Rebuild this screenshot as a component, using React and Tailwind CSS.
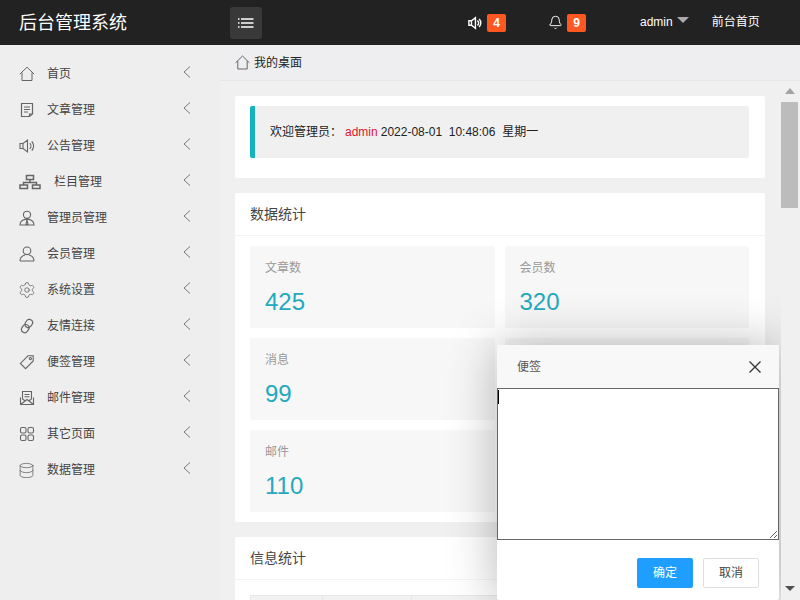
import React from 'react';
import { Settings, Database, Bell } from 'lucide-react';

const Svg = ({ size = 16, w, stroke = 1, children, className = '' }) => (
  <svg
    width={w || size}
    height={size}
    viewBox={`0 0 ${w || size} ${size}`}
    fill="none"
    stroke="currentColor"
    strokeWidth={stroke}
    className={className}
  >
    {children}
  </svg>
);

const HomeIcon = () => (
  <Svg>
    <path d="M0.8 8.2 8 1.2l7.2 7M3 6.5v8h10v-8" />
  </Svg>
);
const DocIcon = () => (
  <Svg stroke={1.2}>
    <path d="M2.5 1.5h11v10.5l-3 2.5h-8zM5 5h6M5 7.5h6M5 10h4M10.5 14.5v-2.5h3" />
  </Svg>
);
const SpeakerIcon = ({ className, stroke = 1.1 }) => (
  <Svg className={className} stroke={stroke}>
    <path d="M1 5.5h3l4.5-3.5v12L4 10.5H1zM4 5.5v5M10.8 5.2a4 4 0 0 1 0 5.6M12.8 3.5a6.5 6.5 0 0 1 0 9" />
  </Svg>
);
const NetworkIcon = () => (
  <Svg w={22} stroke={1.5}>
    <path d="M7.5 1.5h7v4h-7zM1 11h7.5v3.5H1zM13.5 11H21v3.5h-7.5zM11 5.5v3M4.5 11V8.5h13V11" />
  </Svg>
);
const ManagerIcon = () => (
  <Svg stroke={1.1}>
    <circle cx="8" cy="4.8" r="3.6" />
    <path d="M1 15c0-3.4 2.6-5 5-5.6h4c2.4.6 5 2.2 5 5.6zM8 10l-1 4 1 1 1-1z" />
  </Svg>
);
const UserIcon = () => (
  <Svg stroke={1.1}>
    <circle cx="8" cy="4.8" r="3.8" />
    <path d="M1 15c0-3.4 2.6-5.4 5-6M15 15c0-3.4-2.6-5.4-5-6M1 15h14" />
  </Svg>
);
const ChainIcon = () => (
  <Svg stroke={1.2}>
    <rect x="6.5" y="1.2" width="6.5" height="8.5" rx="3.2" transform="rotate(35 9.7 5.5)" />
    <rect x="3" y="6.3" width="6.5" height="8.5" rx="3.2" transform="rotate(35 6.2 10.5)" />
  </Svg>
);
const TagIcon = () => (
  <Svg stroke={1.1}>
    <path d="M9 1.8h5.2V7l-7.6 7.6-5.2-5.2z" />
    <circle cx="11.4" cy="4.6" r="1.1" />
  </Svg>
);
const MailIcon = () => (
  <Svg stroke={1.1}>
    <path d="M1.5 7.5v7h13v-7M3.5 9V1.5h9V9M1.5 14.5 8 9.5l6.5 5M3.5 9 6 10.8M12.5 9 10 10.8M5.5 4.5h5M5.5 6.8h5" />
  </Svg>
);
const GridIcon = () => (
  <Svg stroke={1.1}>
    <rect x="1.5" y="1.5" width="5.5" height="5.5" rx="1.5" />
    <rect x="9" y="1.5" width="5.5" height="5.5" rx="1.5" />
    <rect x="1.5" y="9" width="5.5" height="5.5" rx="1.5" />
    <rect x="9" y="9" width="5.5" height="5.5" rx="1.5" />
  </Svg>
);

const menu = [
  { label: '首页', icon: <HomeIcon /> },
  { label: '文章管理', icon: <DocIcon /> },
  { label: '公告管理', icon: <SpeakerIcon /> },
  { label: '栏目管理', icon: <NetworkIcon />, wide: true },
  { label: '管理员管理', icon: <ManagerIcon /> },
  { label: '会员管理', icon: <UserIcon /> },
  { label: '系统设置', icon: <Settings size={18} strokeWidth={1.1} className="-ml-px" /> },
  { label: '友情连接', icon: <ChainIcon /> },
  { label: '便签管理', icon: <TagIcon /> },
  { label: '邮件管理', icon: <MailIcon /> },
  { label: '其它页面', icon: <GridIcon /> },
  { label: '数据管理', icon: <Database size={17} strokeWidth={1.1} className="-ml-px" /> },
];

// 右列被弹窗挡住的格子不写内容
const stats = [
  { label: '文章数', value: 425 },
  { label: '会员数', value: 320 },
  { label: '消息', value: 99 },
  {},
  { label: '邮件', value: 110 },
  {},
];

const Badge = ({ children }) => (
  <span className="ml-[5px] flex h-[18px] w-[19px] items-center justify-center rounded-[2px] bg-[#ff5722] text-xs font-bold text-white">
    {children}
  </span>
);

export default function App() {
  return (
    <div className="flex h-[600px] w-[800px] flex-col overflow-hidden bg-[#f0f0f0] font-['Liberation_Sans','Noto_Sans_CJK_SC',sans-serif] text-xs text-[#333]">
      <header className="flex h-[45px] shrink-0 items-center bg-[#222] text-white">
        <div className="w-[230px] pl-[19px] text-lg">后台管理系统</div>
        <button className="flex h-8 w-8 items-center justify-center rounded-[3px] bg-[#393939]">
          <svg width="16" height="10" viewBox="0 0 16 10" fill="none" stroke="white" strokeWidth="1.3">
            <path d="M0 1h1.5M3 1h12.5M0 5h1.5M3 5h12.5M0 9h1.5M3 9h12.5" />
          </svg>
        </button>
        <div className="ml-[206px] flex items-center">
          <SpeakerIcon className="w-[14px]" stroke={1.6} />
          <Badge>4</Badge>
        </div>
        <div className="ml-[42px] flex items-center">
          <Bell size={15} strokeWidth={1.5} className="-mr-px" />
          <Badge>9</Badge>
        </div>
        <div className="ml-[54px] flex items-center pb-[2px]">
          admin
          <span className="mb-[3px] ml-[4px] h-0 w-0 border-x-[6px] border-t-[6px] border-x-transparent border-t-[#aaa]"></span>
        </div>
        <div className="ml-[23px] pb-[2px]">前台首页</div>
      </header>

      <div className="flex min-h-0 flex-1">
        <aside className="w-[220px] shrink-0 bg-[#eee] pt-[11px]">
          {menu.map((item) => (
            <div key={item.label} className="flex h-9 items-center pl-[19px] text-[#444]">
              <span className={`flex shrink-0 text-[#666] ${item.wide ? 'w-[35px]' : 'w-7'}`}>{item.icon}</span>
              <span className="flex-1">{item.label}</span>
              <svg width="8" height="12" viewBox="0 0 8 12" fill="none" stroke="#777" strokeWidth="1" className="mr-[29px] mb-[4px]">
                <path d="M7 0.5 1 6l6 5.5" />
              </svg>
            </div>
          ))}
        </aside>

        <main className="flex min-w-0 flex-1 flex-col">
          <div className="flex h-[36px] shrink-0 items-center border-b border-[#e6e6e6] bg-[#eeeef0] pl-[15px] text-[#222]">
            <span className="mr-[4px] text-[#666]">
              <Svg size={15}>
                <path d="M0.6 7.8 7.5 1l6.9 6.8M2.8 6v8h9.4V6" />
              </Svg>
            </span>
            我的桌面
          </div>

          <div className="flex min-h-0 flex-1">
            <div className="relative min-w-0 flex-1 overflow-hidden pt-[15px] pr-4 pl-[15px]">
              <section className="rounded-[2px] bg-white pt-[10px] pr-4 pb-[20px] pl-[15px]">
                <div className="flex h-[52px] items-center rounded-[2px] border-l-[5px] border-[#14b1bf] bg-[#f0f0f0] pl-[15px] text-[#222]">
                  欢迎管理员：
                  <span className="ml-[3px] text-[#e3132f]">admin</span>
                  <span className="ml-[3px] whitespace-pre">2022-08-01  10:48:06  星期一</span>
                </div>
              </section>

              <section className="mt-[15px] rounded-[2px] bg-white">
                <div className="flex h-[43px] items-center border-b border-[#f4f4f4] pl-[15px] text-sm text-[#444]">数据统计</div>
                <div className="grid grid-cols-2 gap-[10px] py-[10px] pr-4 pl-[15px]">
                  {stats.map((s, i) => (
                    <div key={i} className="h-[82px] rounded-[2px] bg-[#f7f7f8] pt-[14px] pl-[15px]">
                      {s.label && <div className="leading-[16px] text-[#999]">{s.label}</div>}
                      {s.label && <div className="mt-[8px] text-2xl leading-[36px] text-[#24a9be]">{s.value}</div>}
                    </div>
                  ))}
                </div>
              </section>

              <section className="mt-[15px] rounded-[2px] bg-white">
                <div className="flex h-[43px] items-center border-b border-[#f4f4f4] pl-[15px] text-sm text-[#444]">信息统计</div>
                <div className="pt-[15px] pr-4 pl-[15px]">
                  <div className="grid h-[40px] grid-cols-[72px_89px_1fr_1fr_1fr] border border-[#e6e6e6] bg-[#f2f2f2]">
                    <div className="border-r border-[#e6e6e6]"></div>
                    <div className="border-r border-[#e6e6e6]"></div>
                    <div className="border-r border-[#e6e6e6]"></div>
                    <div className="border-r border-[#e6e6e6]"></div>
                    <div></div>
                  </div>
                </div>
              </section>

              {/* 便签弹窗 */}
              <div className="absolute top-[264px] left-[277px] flex h-[255px] w-[282px] flex-col rounded-[2px] bg-white shadow-[1px_1px_50px_rgba(0,0,0,0.3)]">
                <div className="flex h-[43px] shrink-0 items-center justify-between rounded-t-[2px] bg-[#f8f8f8] pr-[18px] pl-5 text-[#555]">
                  便签
                  <svg width="12" height="12" viewBox="0 0 12 12" stroke="#333" strokeWidth="1.3" className="mt-[1px]">
                    <path d="M0.5 0.5l11 11M11.5 0.5l-11 11" />
                  </svg>
                </div>
                <div className="relative flex h-[152px] shrink-0">
                  <textarea className="h-full w-full resize border border-[#666] bg-white outline-none" readOnly></textarea>
                  <span className="absolute top-[2px] left-[1px] h-[14px] w-px bg-black"></span>
                </div>
                <div className="flex justify-end gap-[10px] pt-[18px] pr-5">
                  <button className="h-[30px] w-14 rounded-[2px] bg-[#1e9fff] text-white">确定</button>
                  <button className="h-[30px] w-14 rounded-[2px] border border-[#dedede] bg-white text-[#444]">取消</button>
                </div>
              </div>
            </div>

            <div className="flex w-[19px] shrink-0 flex-col items-center pt-[7px] pr-[2px]">
              <span className="h-0 w-0 border-x-[5px] border-b-[6px] border-x-transparent border-b-[#a3a3a3]"></span>
              <span className="mt-[8px] h-[106px] w-[17px] bg-[#bcbcbc]"></span>
              <span className="mt-auto mb-[9px] h-0 w-0 border-x-[5px] border-t-[5px] border-x-transparent border-t-[#505050]"></span>
            </div>
          </div>
        </main>
      </div>
    </div>
  );
}
